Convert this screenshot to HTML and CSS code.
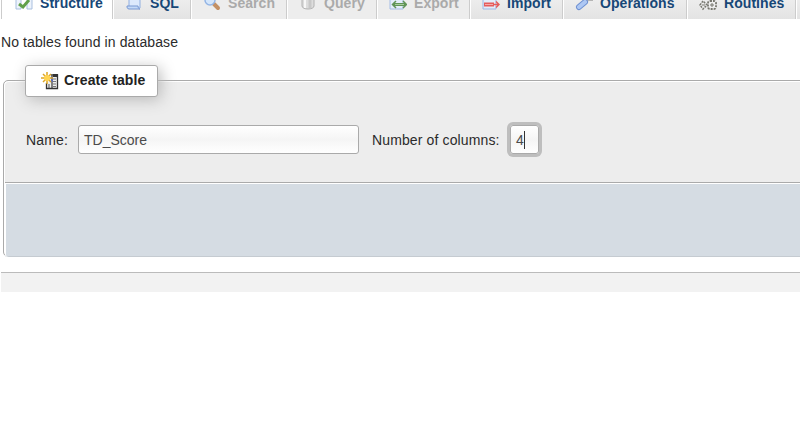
FILE: index.html
```
<!DOCTYPE html>
<html lang="en">
<head>
<meta charset="utf-8">
<title>Create table</title>
<link rel="stylesheet" href="styles.css">
</head>
<body>
<nav class="tabs">
  <a class="tab active"><svg class="icon" viewBox="0 0 18 18"><path d="M1 1h5v15H1zM12 1h5v15h-5z" fill="#edf3fc" stroke="#a9bfdf"/><path d="M4 11l4 3 6-7" fill="none" stroke="#61a04b" stroke-width="3"/></svg><span>Structure</span></a>
  <a class="tab sql"><svg class="icon" viewBox="0 0 18 18"><path d="M4 1h11v14H4z" fill="#dce9fc" stroke="#91afe0"/><path d="M2 13h11c0 2 1 3 2 3H4c-2 0-2-2-2-3z" fill="#c4daf8" stroke="#7898d2"/></svg><span>SQL</span></a>
  <a class="tab search off"><svg class="icon" viewBox="0 0 18 18"><path d="M11 11l4 4" stroke="#c39065" stroke-width="4" stroke-linecap="round"/><circle cx="7" cy="7" r="5" fill="#d4e6fb" stroke="#93b5e5" stroke-width="1.5"/></svg><span>Search</span></a>
  <a class="tab query off"><svg class="icon" viewBox="0 0 18 18"><path d="M3 3v10c0 4 12 4 12 0V3z" fill="#ddd" stroke="#b2b2b2"/><path d="M6 4v11" stroke="#f7f7f7" stroke-width="2"/><path d="M11 4v11" stroke="#c8c8c8" stroke-width="3"/></svg><span>Query</span></a>
  <a class="tab export off"><svg class="icon" viewBox="0 0 18 18"><path d="M1 1h13v15H1z" fill="#e3ecfa" stroke="#a4bce4"/><path d="M4 11.500h13" stroke="#609457" stroke-width="3"/><path d="M7 8l-3.500 3.500L7 15M14 8l3.500 3.500L14 15" fill="none" stroke="#609457" stroke-width="1.500"/><path d="M6 11.500h9" stroke="#a8cc9c"/></svg><span>Export</span></a>
  <a class="tab import"><svg class="icon" viewBox="0 0 18 18"><path d="M1 1h13v15H1z" fill="#e3ecfa" stroke="#9db7e5"/><path d="M2 11.500h10" stroke="#e65c5c" stroke-width="4"/><path d="M12 11.500h5M14 8.500l3 3-3 3" fill="none" stroke="#e65c5c" stroke-width="1.500"/><path d="M3 11.500h8" stroke="#f4aaaa"/></svg><span>Import</span></a>
  <a class="tab operations"><svg class="icon" viewBox="0 0 18 18"><path d="M10 8l3-2h5" fill="none" stroke="#b5b5b5" stroke-width="4"/><path d="M4 14L10 9" stroke="#6f91d2" stroke-width="6" stroke-linecap="round"/><path d="M4 14L10 9" stroke="#adc7f3" stroke-width="4" stroke-linecap="round"/></svg><span>Operations</span></a>
  <a class="tab routines"><svg class="icon" viewBox="0 0 18 18"><g fill="#eee" stroke="#77776f"><path d="M1 12l3-4 4 4-4 4z" stroke-width="1.500" stroke-dasharray="2 1"/><rect x="9" y="8" width="8" height="8" rx="2" stroke-width="1.800" stroke-dasharray="2 1"/><path d="M11 12h4M13 10v4M3 12h3"/></g></svg><span>Routines</span></a>
  <a class="tab"></a>
</nav>
<p class="message">No tables found in database</p>
<form class="panel">
  <div class="legend"><svg class="table-icon" viewBox="0 0 18 18"><path d="M10 3h6.500v13.500h-11V11" fill="#eee" stroke="#333" stroke-width="1.300"/><path d="M12 2h5v3h-5z" fill="#333"/><path d="M12 7h3M12 9.500h3M12 12h3M12 14.500h3" stroke="#777"/><path d="M11 4v12" stroke="#444" stroke-width="1.300"/><path d="M8 12v4" stroke="#555"/><path d="M11 5v5" stroke="#5269c4" stroke-width="1.500"/><path d="M6 0v12M0 6h12M2 2l8 8M10 2l-8 8" stroke="#dca526" stroke-width="1.500"/><circle cx="6" cy="6" r="3" fill="#ffd451"/></svg><span>Create table</span></div>
  <div class="fields">
    <label class="name-label">Name:</label>
    <div class="field name-field"><span>TD_Score</span></div>
    <label class="count-label">Number of columns:</label>
    <div class="field count-field"><span>4</span><i class="caret"></i></div>
  </div>
  <div class="actions"></div>
</form>
<div class="console"></div>
</body>
</html>
```
FILE: styles.css
```
* { box-sizing: border-box; }
body {
  margin: 0;
  height: 422px;
  overflow: hidden;
  background: #fff;
  color: #2b2b2b;
  font: 14px/18px "Liberation Sans", Arial, sans-serif;
}
.tabs {
  display: grid;
  grid-template-columns: 111px 78px 96px 90px 93px 93px 124px 109px 20px;
  height: 19px;
  padding-left: 1px;
  overflow: hidden;
}
.tab {
  display: flex;
  align-items: flex-start;
  height: 19px;
  padding-left: 12px;
  border-left: 1px solid #ccc;
  box-shadow: inset 1px 0 #fff;
  background: linear-gradient(#ededed, #e3e3e3);
  color: #174777;
  font-weight: bold;
  letter-spacing: .06px;
  white-space: nowrap;
}
.tab.active { padding-left: 13px; background: #fff; }
.tab.off { background: #ededed; color: #aaa; }
.tab span { margin: -6px 0 0 7px; }
.icon { flex: none; width: 18px; height: 18px; margin-top: -7px; }
.message { margin: 14px 0 0 1px; letter-spacing: .1px; }
.panel {
  margin: 29px -5px 0 3px;
  height: 177px;
  margin-bottom: 0;
  border: 1px solid #aaa;
  border-radius: 5px;
  background: #ededed;
  box-shadow: inset 1px 1px #fff, inset 0 -1px #c8c8c8;
}
.legend {
  display: flex;
  align-items: center;
  width: 133px;
  height: 32px;
  margin: -16px 0 0 21px;
  padding-left: 15px;
  border: 1px solid #aaa;
  border-radius: 3px;
  background: #fff;
  box-shadow: 3px 3px 15px #bbb;
  color: #222;
  font-weight: bold;
  letter-spacing: .1px;
}
.table-icon { width: 18px; height: 18px; }
.legend span { margin: -2px 0 0 5px; }
.fields {
  display: flex;
  align-items: center;
  height: 85px;
  padding-left: 22px;
}
.name-label { width: 52px; letter-spacing: .15px; }
.field {
  display: flex;
  align-items: center;
  height: 29px;
  padding-left: 5px;
  border: 1px solid #aaa;
  border-radius: 3px;
  background: linear-gradient(#fff, #f5f5f5 50%, #fff);
  color: #4b4b4b;
}
.name-field { width: 281px; }
.count-label {
  width: 151px;
  padding-left: 13px;
  letter-spacing: .13px;
  white-space: nowrap;
}
.count-field {
  width: 29px;
  box-shadow: 0 0 0 3px #bebebe;
}
.caret { width: 1px; height: 18px; background: #333; }
.actions {
  height: 75px;
  margin: 0 0 0 1px;
  border-top: 1px solid #aaa;
  border-radius: 0 0 0 3px;
  background: #d5dce3;
  box-shadow: inset 0 1px #fff, inset 1px 0 #fff, inset 0 -1px #c5cbd1;
}
.console {
  height: 20px;
  margin: 15px 0 0 1px;
  border-top: 1px solid #bbb;
  background: #f2f2f2;
}
```
